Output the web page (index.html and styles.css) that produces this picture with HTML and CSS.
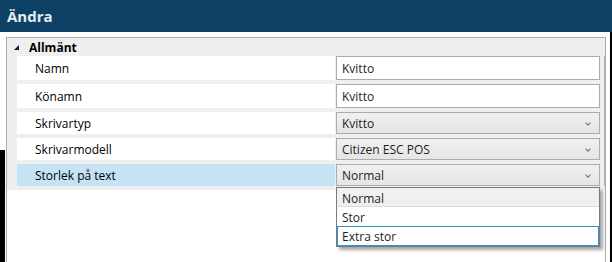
FILE: index.html
```html
<!DOCTYPE html>
<html lang="sv">
<head>
    <meta charset="UTF-8">
    <title>Ändra</title>
    <link rel="stylesheet" href="styles.css">
</head>
<body>

<div class="frame">
    <div class="titlebar">Ändra</div>

    <div class="content">
        <div class="edge"></div>
        <div class="grid">
            <div class="category">
                <div class="category-header">
                    <svg class="expander" width="5" height="5" viewBox="0 0 5 5"><polygon points="5,0 5,5 0,5" fill="#1a1a1a"/></svg>
                    <span>Allmänt</span>
                </div>

                <div class="rows">
                    <div class="row text-row">
                        <div class="name">Namn</div>
                        <div class="value textbox">Kvitto</div>
                    </div>
                    <div class="row text-row">
                        <div class="name">Könamn</div>
                        <div class="value textbox">Kvitto</div>
                    </div>
                    <div class="row combo-row">
                        <div class="name">Skrivartyp</div>
                        <div class="value combo">Kvitto<span class="chevron"></span></div>
                    </div>
                    <div class="row combo-row">
                        <div class="name">Skrivarmodell</div>
                        <div class="value combo">Citizen ESC POS<span class="chevron"></span></div>
                    </div>
                    <div class="row combo-row selected">
                        <div class="name">Storlek på text</div>
                        <div class="value combo open">
                            Normal<span class="chevron"></span>
                            <ul class="dropdown">
                                <li class="current">Normal</li>
                                <li>Stor</li>
                                <li class="focused">Extra stor</li>
                            </ul>
                        </div>
                    </div>
                </div>
            </div>
        </div>
    </div>
</div>

</body>
</html>
```

FILE: styles.css
```css
body {
    margin: 0;
    padding: 0;
    background-color: #fff;
    font-family: "Open Sans", "Noto Sans", Arial, sans-serif;
    font-size: 12px;
    color: #000;
}
.frame {
    width: 612px;
    height: 262px;
    overflow: hidden;
    display: flex;
    flex-direction: column;
}
.titlebar {
    height: 32px;
    line-height: 32px;
    padding-left: 7px;
    background-color: #0c4165;
    color: #e6edf3;
    font-size: 15px;
    font-weight: bold;
}
.content {
    flex: 1;
    display: flex;
    padding-top: 5px;
    border-right: 2px solid #000;
    width: 610px;
}
.edge {
    width: 5px;
    margin: 113px 1px 0 0;
    background-color: #000;
}
.grid {
    width: 598px;
    border: 1px solid #ababab;
    border-bottom: none;
    background-color: #fff;
}
.category {
    background-color: #efefef;
    padding-bottom: 4px;
}
.category-header {
    height: 18px;
    display: flex;
    align-items: center;
    font-weight: bold;
}
.expander {
    margin: 0 10px 0 7px;
}
.rows {
    display: flex;
    flex-direction: column;
    gap: 4px;
    padding-left: 10px;
    padding-right: 4px;
    border-right: 1px solid #b5b5b5;
}
.row {
    display: flex;
    gap: 1px;
}
.text-row {
    height: 24px;
}
.combo-row {
    height: 22px;
}
.name {
    width: 300px;
    flex: none;
    padding-left: 18px;
    background-color: #fff;
    display: flex;
    align-items: center;
}
.selected .name {
    background-color: #c5e3f5;
}
.value {
    position: relative;
    flex: 1;
    box-sizing: border-box;
    border: 1px solid #acacac;
    padding-left: 5px;
    display: flex;
    align-items: center;
    color: #1e1e1e;
}
.textbox {
    background-color: #fff;
    height: 24px;
}
.combo {
    background: linear-gradient(#f0f0f0, #e5e5e5);
}
.chevron {
    position: absolute;
    right: 9px;
    top: 8px;
    width: 3px;
    height: 3px;
    border-right: 1px solid #707070;
    border-bottom: 1px solid #707070;
    transform: rotate(45deg);
}
.dropdown {
    position: absolute;
    top: 22px;
    left: -1px;
    right: -1px;
    margin: 0;
    padding: 0;
    list-style: none;
    background-color: #fff;
    border: 1px solid #7a7a7a;
    box-shadow: 3px 3px 3px rgba(0, 0, 0, 0.35);
}
.dropdown li {
    height: 19px;
    line-height: 19px;
    padding-left: 4px;
    border: 1px solid transparent;
    box-sizing: border-box;
}
.dropdown li.current {
    background-color: #f0f0f0;
    border-bottom-color: #dadada;
}
.dropdown li.focused {
    height: 20px;
    border-color: #2f94cf;
}
```
